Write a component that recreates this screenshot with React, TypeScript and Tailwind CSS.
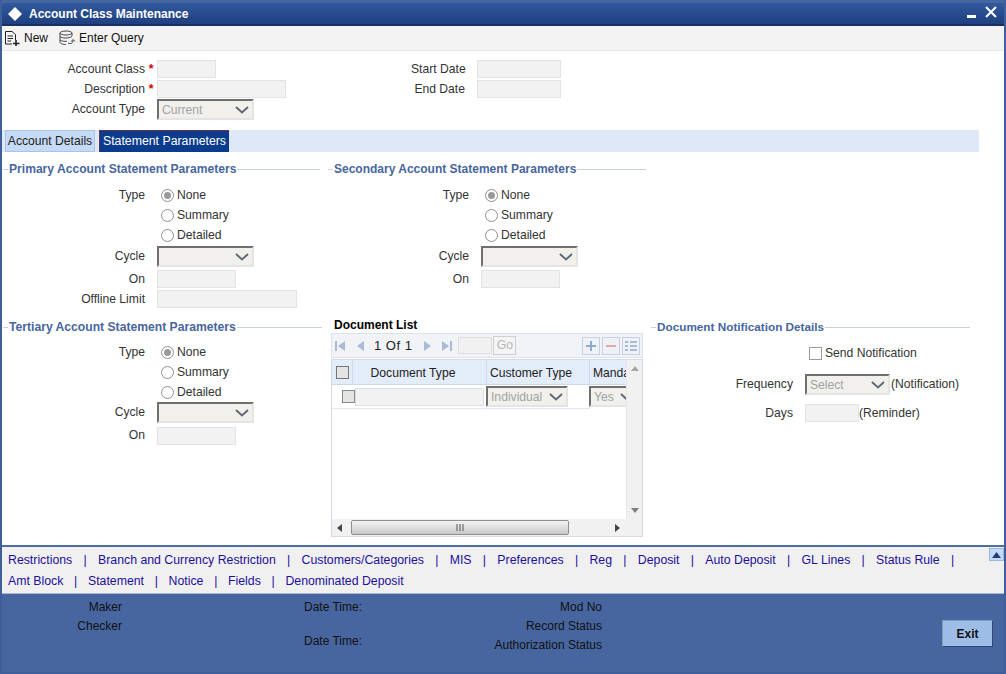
import React from "react";

const Chevron = () => (
  <svg width="14" height="8" viewBox="0 0 14 8" className="shrink-0">
    <path d="M1 1 L7 6.5 L13 1" fill="none" stroke="#5f6a78" strokeWidth="2" />
  </svg>
);

const Input = ({ w }: { w: string }) => <div className={`${w} h-[18px] bg-[#f2f2f2] border border-[#e3e3e3] shrink-0`} />;

const Select = ({ w, text }: { w: string; text?: string }) => (
  <div className={`${w} h-[21px] shrink-0 flex items-center justify-between bg-[#f1f0eb] border-t-2 border-l-2 border-t-[#6f6f6f] border-l-[#6f6f6f] border-b-2 border-r-2 border-b-[#e4e4e4] border-r-[#e4e4e4] pl-[3px] pr-[3px] text-[#a3a3a3]`}>
    <span className="pt-px">{text}</span>
    <Chevron />
  </div>
);

const Radio = ({ on, label }: { on?: boolean; label: string }) => (
  <div className="flex items-center h-[20px]">
    <span className="w-[13px] h-[13px] rounded-full border border-[#8f8f8f] bg-white flex items-center justify-center mr-[3px]">
      {on && <span className="w-[7px] h-[7px] rounded-full bg-[#9a9a9a]" />}
    </span>
    <span>{label}</span>
  </div>
);

const Legend = ({ title, w, size }: { title: string; w: string; size: string }) => (
  <div className={`${w} flex items-center h-[18px]`}>
    <span className="w-[5px] h-px bg-[#c5d0e0] shrink-0" />
    <span className={`px-px font-bold text-[#47669f] whitespace-nowrap ${size}`}>{title}</span>
    <span className="flex-1 h-px bg-[#c5d0e0]" />
  </div>
);

const Row = ({ label, lw, h, children }: { label: string; lw: string; h: string; children?: React.ReactNode }) => (
  <div className={`flex items-center ${h}`}>
    <span className={`${lw} text-right shrink-0 whitespace-nowrap`}>{label}</span>
    {children}
  </div>
);

const RadioGroup = ({ lw, mb, pl }: { lw: string; mb?: string; pl: string }) => (
  <div className={`flex ${mb ?? ""}`}>
    <span className={`${lw} text-right shrink-0 leading-[20px]`}>Type</span>
    <div className={`flex flex-col ${pl}`}>
      <Radio on label="None" />
      <Radio label="Summary" />
      <Radio label="Detailed" />
    </div>
  </div>
);

const Tri = ({ d }: { d: string }) => (
  <svg width="12" height="14" viewBox="0 0 12 14" className="shrink-0">
    <path d={d} fill="#a9bbd6" />
  </svg>
);

const GridBtn = ({ children }: { children: React.ReactNode }) => (
  <span className="w-[18px] h-[18px] bg-[#eef1f6] border border-[#c5d0e0] flex items-center justify-center">{children}</span>
);

const Sep = () => <span className="text-[#1c0f9c]">|</span>;

const Links = ({ items, trailing, gap }: { items: string[]; trailing?: boolean; gap: string }) => (
  <div className={`flex items-center h-[21px] text-[#1c0f9c] text-[12.3px] ${gap}`}>
    {items.map((t, i) => (
      <React.Fragment key={t}>
        {i > 0 && <Sep />}
        <span className="whitespace-nowrap">{t}</span>
      </React.Fragment>
    ))}
    {trailing && <Sep />}
  </div>
);

export default function App() {
  return (
    <div
      className="w-[1006px] h-[674px] flex flex-col overflow-hidden bg-white text-[#333] text-[12.15px] border-l-2 border-r-2 border-[#3f5f9b]"
      style={{ fontFamily: '"Liberation Sans", Arial, sans-serif' }}
    >
      {/* title */}
      <div className="h-[26px] shrink-0 flex items-center bg-gradient-to-b from-[#31599f] to-[#1f3f7f] border-t-[3px] border-t-[#46669f] border-b-2 border-b-[#16315f] text-white font-bold">
        <svg width="16" height="16" viewBox="0 0 16 16" className="ml-[5px] mr-[6px]">
          <path d="M8 1 L15 8 L8 15 L1 8 Z" fill="#fff" />
        </svg>
        <span className="text-[12px]">Account Class Maintenance</span>
        <div className="ml-auto flex items-center gap-[9px] mr-[7px]">
          <span className="w-[9px] h-[3px] bg-white mt-[5px]" />
          <svg width="12" height="12" viewBox="0 0 12 12" className="-mt-[4px]">
            <path d="M1 1 L11 11 M11 1 L1 11" stroke="#fff" strokeWidth="2" />
          </svg>
        </div>
      </div>

      {/* toolbar */}
      <div className="h-[25px] shrink-0 flex items-center bg-[#f3f3f3] border-b border-[#e8e8e8] text-[#111] text-[12px]">
        <svg width="18" height="16" viewBox="0 0 18 16" className="ml-[2px] mr-[2px]">
          <path d="M1.5 1.5 H8 L11.5 4.5 V10 M1.5 1.5 V14 H8 M3.5 6 H9 M3.5 8.5 H9 M3.5 11 H7" fill="none" stroke="#222" strokeWidth="1" />
          <path d="M12 10 V16 M9 13.5 H15.5" stroke="#222" strokeWidth="1.6" />
        </svg>
        <span>New</span>
        <svg width="18" height="16" viewBox="0 0 18 16" className="ml-[10px] mr-[3px]">
          <ellipse cx="8" cy="3" rx="6" ry="2" fill="none" stroke="#444" />
          <path d="M2 3 V12 C2 14 6 14.5 8 14.5 M14 3 V6 M2 6.5 C4 8.5 11 8.5 14 6.5 M2 10 C4 11.5 7 11.5 9 11.2" fill="none" stroke="#444" />
          <path d="M10 13 C13 14.5 15 13 15 10 M13 11.5 L15 9.5 L17 11.5" fill="none" stroke="#444" />
        </svg>
        <span>Enter Query</span>
      </div>

      {/* header form */}
      <div className="h-[79px] shrink-0 flex pt-[9px]">
        <div className="w-[409px] flex flex-col gap-[2px]">
          <Row label="Account Class" lw="w-[143px]" h="h-[18px]">
            <span className="w-[12px] text-center text-[#d00000] font-bold">*</span>
            <Input w="w-[59px]" />
          </Row>
          <Row label="Description" lw="w-[143px]" h="h-[18px]">
            <span className="w-[12px] text-center text-[#d00000] font-bold">*</span>
            <Input w="w-[129px]" />
          </Row>
          <Row label="Account Type" lw="w-[143px]" h="h-[21px] -mt-[1px]">
            <span className="w-[12px]" />
            <Select w="w-[97px]" text="Current" />
          </Row>
        </div>
        <div className="flex flex-col gap-[2px]">
          <Row label="Start Date" lw="w-[54px]" h="h-[18px]">
            <span className="w-[12px]" />
            <Input w="w-[84px]" />
          </Row>
          <Row label="End Date" lw="w-[54px]" h="h-[18px]">
            <span className="w-[12px]" />
            <Input w="w-[84px]" />
          </Row>
        </div>
      </div>

      {/* tabs */}
      <div className="w-[977px] h-[22px] shrink-0 flex items-stretch bg-[#dfe8f6] pl-[3px] gap-[4px]">
        <div className="w-[90px] flex items-center justify-center bg-[#c5daf4] border border-[#a9c4e8] text-[#222]">Account Details</div>
        <div className="w-[130px] flex items-center justify-center bg-[#0b3b8c] border-t border-l border-[#6b2f4f] text-white text-[12.3px]">Statement Parameters</div>
      </div>

      {/* primary / secondary */}
      <div className="h-[166px] shrink-0 flex pt-[8px] pl-px">
        <div className="w-[325px]">
          <Legend title="Primary Account Statement Parameters" w="w-[317px]" size="text-[12.1px]" />
          <div className="mt-[7px]">
            <RadioGroup lw="w-[142px]" mb="mb-[1px]" pl="pl-[16px]" />
            <Row label="Cycle" lw="w-[142px]" h="h-[21px]">
              <span className="w-[12px]" />
              <Select w="w-[97px]" />
            </Row>
            <Row label="On" lw="w-[142px]" h="h-[24px]">
              <span className="w-[12px]" />
              <Input w="w-[79px]" />
            </Row>
            <Row label="Offline Limit" lw="w-[142px]" h="h-[18px] -mt-[1px]">
              <span className="w-[12px]" />
              <Input w="w-[140px]" />
            </Row>
          </div>
        </div>
        <div>
          <Legend title="Secondary Account Statement Parameters" w="w-[318px]" size="text-[12px]" />
          <div className="mt-[7px]">
            <RadioGroup lw="w-[141px]" mb="mb-[1px]" pl="pl-[16px]" />
            <Row label="Cycle" lw="w-[141px]" h="h-[21px]">
              <span className="w-[12px]" />
              <Select w="w-[97px]" />
            </Row>
            <Row label="On" lw="w-[141px]" h="h-[24px]">
              <span className="w-[12px]" />
              <Input w="w-[79px]" />
            </Row>
          </div>
        </div>
      </div>

      {/* tertiary / doc list / notification */}
      <div className="flex-1 flex pl-px min-h-0">
        <div className="w-[328px] shrink-0">
          <Legend title="Tertiary Account Statement Parameters" w="w-[319px]" size="text-[12.15px]" />
          <div className="mt-[6px]">
            <RadioGroup lw="w-[142px]" pl="pl-[16px]" />
            <Row label="Cycle" lw="w-[142px]" h="h-[21px]">
              <span className="w-[12px]" />
              <Select w="w-[97px]" />
            </Row>
            <Row label="On" lw="w-[142px]" h="h-[25px]">
              <span className="w-[12px]" />
              <Input w="w-[79px]" />
            </Row>
          </div>
        </div>

        <div className="w-[312px] shrink-0 flex flex-col">
          <div className="h-[15px] font-bold text-black pl-[3px] leading-[15px] text-[12px]">Document List</div>
          <div className="h-[25px] flex items-center bg-[#f1f3f6] border border-[#dde3ec] pl-[2px] pr-[2px]">
            <Tri d="M1 2 H3 V12 H1 Z M11 2 V12 L4 7 Z" />
            <span className="w-[8px]" />
            <Tri d="M10 2 V12 L3 7 Z" />
            <span className="ml-[8px] text-[#222] text-[13px] tracking-[0.5px]">1 Of 1</span>
            <span className="w-[10px]" />
            <Tri d="M2 2 V12 L9 7 Z" />
            <span className="w-[7px]" />
            <Tri d="M1 2 V12 L8 7 Z M9 2 H11 V12 H9 Z" />
            <span className="ml-[5px] w-[34px] h-[17px] bg-[#f1f1f1] border border-[#dedede]" />
            <span className="w-[23px] h-[19px] ml-px bg-[#f4f4f4] border border-[#cfcfcf] flex items-center justify-center text-[#b5b5b5]">Go</span>
            <div className="ml-auto flex gap-[2px]">
              <GridBtn>
                <svg width="12" height="12" viewBox="0 0 12 12"><path d="M6 1 V11 M1 6 H11" stroke="#8fa9cf" strokeWidth="2" /></svg>
              </GridBtn>
              <GridBtn>
                <span className="w-[10px] h-[2px] bg-[#e8a7a7]" />
              </GridBtn>
              <GridBtn>
                <svg width="14" height="12" viewBox="0 0 14 12"><path d="M1 2 H4 M1 6 H4 M1 10 H4 M6 2 H13 M6 6 H13 M6 10 H13" stroke="#a9bbd6" strokeWidth="2" /></svg>
              </GridBtn>
            </div>
          </div>
          <div className="h-[178px] mt-px border border-[#d5dbe4] flex flex-col bg-white">
            <div className="flex-1 flex min-h-0">
              <div className="w-[294px] flex flex-col overflow-hidden">
                <div className="h-[25px] flex items-stretch bg-[#e3ecf9] border-b border-[#cdd9ea] text-[#222] shrink-0">
                  <div className="w-[21px] shrink-0 flex items-center justify-center border-r border-[#cdd9ea]">
                    <span className="w-[13px] h-[13px] bg-[#e4e4e4] border border-[#777]" />
                  </div>
                  <div className="w-[134px] shrink-0 flex items-center justify-center border-r border-[#cdd9ea] pr-[13px] pt-[2px]">Document Type</div>
                  <div className="w-[103px] shrink-0 flex items-center border-r border-[#cdd9ea] pl-[3px] pt-[2px]">Customer Type</div>
                  <div className="pl-[3px] pt-[2px] flex items-center whitespace-nowrap">Manda</div>
                </div>
                <div className="h-[24px] flex items-center border-b border-[#e3e8f0] w-[258px] shrink-0">
                  <div className="w-[23px] shrink-0 flex items-center justify-end">
                    <span className="w-[13px] h-[13px] bg-[#e4e4e4] border border-[#888]" />
                  </div>
                  <span className="w-[129px] h-[18px] bg-[#f2f2f2] border border-[#dedede] shrink-0" />
                  <div className="ml-[2px] shrink-0"><Select w="w-[82px]" text="Individual" /></div>
                  <div className="ml-[21px] shrink-0"><Select w="w-[50px]" text="Yes" /></div>
                </div>
              </div>
              <div className="w-[16px] bg-[#f1f1f1] flex flex-col items-center justify-between py-[6px] border-l border-[#e8e8e8] ml-auto">
                <svg width="8" height="5" viewBox="0 0 8 5"><path d="M4 0 L8 5 H0 Z" fill="#a5a5a5" /></svg>
                <svg width="8" height="5" viewBox="0 0 8 5"><path d="M0 0 H8 L4 5 Z" fill="#7f7f7f" /></svg>
              </div>
            </div>
            <div className="h-[17px] flex items-center bg-[#f1f1f1] shrink-0">
              <svg width="6" height="8" viewBox="0 0 6 8" className="ml-[5px]"><path d="M5 0 V8 L0 4 Z" fill="#444" /></svg>
              <div className="ml-[8px] w-[218px] h-[15px] rounded-[2px] border border-[#8f8f8f] bg-gradient-to-b from-[#f4f4f4] to-[#c8c8c8] flex items-center justify-center">
                <svg width="9" height="7" viewBox="0 0 9 7"><path d="M1 0 V7 M4 0 V7 M7 0 V7" stroke="#555" strokeWidth="1" /></svg>
              </div>
              <svg width="6" height="8" viewBox="0 0 6 8" className="ml-[46px]"><path d="M0 0 V8 L5 4 Z" fill="#444" /></svg>
            </div>
          </div>
        </div>

        <div className="ml-[8px] flex-1">
          <Legend title="Document Notification Details" w="w-[319px]" size="text-[11.75px]" />
          <div className="h-[7px]" />
          <div className="flex items-center h-[20px] pl-[158px]">
            <span className="w-[13px] h-[13px] bg-white border border-[#9a9a9a] mr-[3px]" />
            <span>Send Notification</span>
          </div>
          <div className="h-[11px]" />
          <div className="flex items-center h-[21px]">
            <span className="w-[142px] text-right shrink-0">Frequency</span>
            <span className="w-[12px]" />
            <Select w="w-[85px]" text="Select" />
            <span className="ml-[1px]">(Notification)</span>
          </div>
          <div className="h-[9px]" />
          <div className="flex items-center h-[18px]">
            <span className="w-[142px] text-right shrink-0">Days</span>
            <span className="w-[12px]" />
            <Input w="w-[54px]" />
            <span>(Reminder)</span>
          </div>
        </div>
      </div>

      {/* links */}
      <div className="relative h-[48px] shrink-0 bg-[#f0f0f0] border-t-2 border-[#4d6da3] pl-[6px] pt-[3px] flex flex-col">
        <Links
          gap="gap-[11.3px]"
          trailing
          items={["Restrictions", "Branch and Currency Restriction", "Customers/Categories", "MIS", "Preferences", "Reg", "Deposit", "Auto Deposit", "GL Lines", "Status Rule"]}
        />
        <Links gap="gap-[10.7px]" items={["Amt Block", "Statement", "Notice", "Fields", "Denominated Deposit"]} />
        <span className="absolute right-0 top-[1px] w-[15px] h-[13px] bg-[#c5daf4] border border-[#9ab6dc] flex items-center justify-center">
          <svg width="9" height="6" viewBox="0 0 9 6"><path d="M4.5 0 L9 6 H0 Z" fill="#1f3f7f" /></svg>
        </span>
      </div>

      {/* footer */}
      <div className="flex-none h-[81px] bg-[#47669f] border-t border-[#a9b9d3] border-b-2 border-b-[#3f5f9b] flex text-[#111] text-[12px] pt-[4px]">
        <div className="w-[120px] flex flex-col items-end">
          <span className="h-[19px] leading-[19px]">Maker</span>
          <span className="h-[19px] leading-[19px]">Checker</span>
        </div>
        <div className="w-[240px] flex flex-col items-end">
          <span className="h-[19px] leading-[19px]">Date Time:</span>
          <span className="h-[15px]" />
          <span className="h-[19px] leading-[19px]">Date Time:</span>
        </div>
        <div className="w-[240px] flex flex-col items-end">
          <span className="h-[19px] leading-[19px]">Mod No</span>
          <span className="h-[19px] leading-[19px]">Record Status</span>
          <span className="h-[19px] leading-[19px]">Authorization Status</span>
        </div>
        <div className="ml-auto mr-[11px] mt-[22px] w-[51px] h-[27px] flex items-center justify-center bg-[#9dbde6] border border-[#7f9cc6] border-b-[#2f4878] border-r-[#2f4878] font-bold text-[#111]">
          Exit
        </div>
      </div>
    </div>
  );
}
